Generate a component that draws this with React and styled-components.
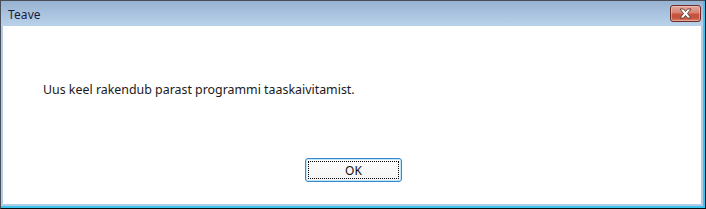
import React from "react";
import styled, { createGlobalStyle } from "styled-components";

const GlobalStyle = createGlobalStyle`
  html, body {
    margin: 0;
    padding: 0;
    background: #000;
  }
  body {
    font-family: "Noto Sans", "Segoe UI", "Liberation Sans", sans-serif;
  }
`;

const Frame = styled.div`
  width: 706px;
  height: 209px;
  box-sizing: border-box;
  border-top: 1px solid #4a4f57;
  border-left: 1px solid #4a4f57;
  border-right: 1px solid #0c0c0c;
  border-bottom: 1px solid #0c0c0c;
  background: #3cc4ee;
  display: flex;
`;

const Chrome = styled.div`
  flex: 1;
  margin: 0 2px 2px 0;
  background: #b3cde8;
  display: flex;
  flex-direction: column;
`;

const TitleBar = styled.div`
  height: 25px;
  flex: none;
  display: flex;
  align-items: center;
  justify-content: space-between;
  padding: 2px 2px 0 7px;
  box-sizing: border-box;
  background: linear-gradient(to bottom, #97b2d1 0%, #a9c3df 50%, #bad2eb 100%);
`;

const Title = styled.span`
  font-size: 12px;
  color: #1b1b3a;
  letter-spacing: 0.1px;
`;

const CloseButton = styled.button`
  width: 31px;
  height: 17px;
  margin-top: -3px;
  padding: 0;
  border: 1px solid #6b2c25;
  border-radius: 3px;
  display: flex;
  align-items: center;
  justify-content: center;
  background: linear-gradient(
    to bottom,
    #e6a89d 0%,
    #d68473 45%,
    #c8513d 55%,
    #c6553f 80%,
    #d8826c 100%
  );
  box-shadow: inset 0 0 0 1px rgba(255, 220, 210, 0.45);
`;

const Client = styled.div`
  flex: 1;
  margin: 0 2px 2px 2px;
  background: #fff;
  display: flex;
  flex-direction: column;
`;

const Message = styled.p`
  margin: 0;
  padding: 55px 0 0 40px;
  height: 132px;
  box-sizing: border-box;
  font-size: 12.4px;
  color: #1a1a1a;
`;

const Footer = styled.div`
  display: flex;
  justify-content: center;
  padding-left: 3px;
`;

const OkButton = styled.button`
  width: 97px;
  height: 24px;
  padding: 2px;
  border: 1px solid #3a87c7;
  border-radius: 3px;
  background: linear-gradient(to bottom, #fdfdfd, #f3f3f3);
  box-shadow: inset 0 0 0 1px #bfe6fa;
  font-family: inherit;
  font-size: 12px;
  color: #111;
  box-sizing: border-box;
`;

const FocusRing = styled.span`
  display: flex;
  align-items: center;
  justify-content: center;
  height: 100%;
  border: 1px dotted #000;
  box-sizing: border-box;
`;

const CloseGlyph = () => (
  <svg width="15" height="11" viewBox="0 0 15 11">
    <path
      d="M2 1 L5.5 1 L7.5 3.5 L9.5 1 L13 1 L9.5 5.5 L13 10 L9.5 10 L7.5 7.5 L5.5 10 L2 10 L5.5 5.5 Z"
      fill="#ffffff"
      stroke="#5a3a36"
      strokeWidth="0.9"
      strokeLinejoin="round"
    />
  </svg>
);

const App = () => {
  return (
    <>
      <GlobalStyle />
      <Frame>
        <Chrome>
          <TitleBar>
            <Title>Teave</Title>
            <CloseButton aria-label="Sulge">
              <CloseGlyph />
            </CloseButton>
          </TitleBar>
          <Client>
            <Message>Uus keel rakendub parast programmi taaskaivitamist.</Message>
            <Footer>
              <OkButton>
                <FocusRing>OK</FocusRing>
              </OkButton>
            </Footer>
          </Client>
        </Chrome>
      </Frame>
    </>
  );
};

export default App;
